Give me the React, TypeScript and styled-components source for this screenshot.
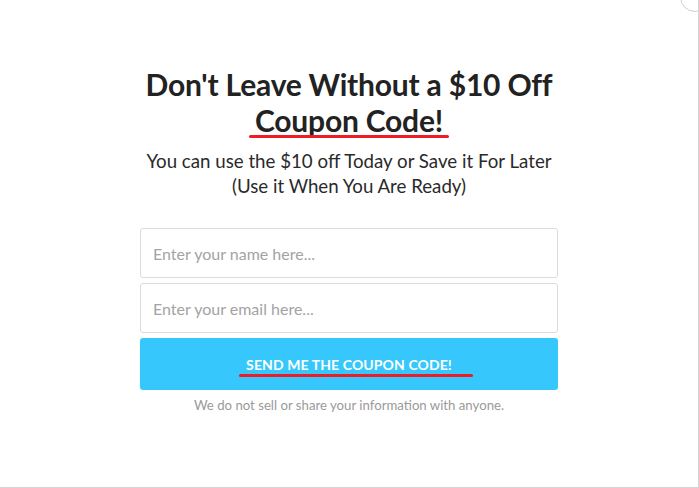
import React from 'react';
import styled, { createGlobalStyle } from 'styled-components';

const GlobalStyle = createGlobalStyle`
  html, body {
    margin: 0;
    padding: 0;
    background: #ffffff;
  }
`

const Frame = styled.div`
  position: relative;
  width: 699px;
  height: 488px;
  box-sizing: border-box;
  border-right: 1px solid #d4d4d4;
  border-bottom: 1px solid #d4d4d4;
  background: #ffffff;
  overflow: hidden;
  font-family: Lato, "Open Sans", sans-serif;
  display: flex;
  justify-content: center;
`

const CloseRing = styled.div`
  position: absolute;
  top: -18px;
  right: -12px;
  width: 28px;
  height: 28px;
  border: 1px solid #cfcfcf;
  border-radius: 50%;
`

const Column = styled.div`
  width: 418px;
  padding-top: 66px;
  display: flex;
  flex-direction: column;
  align-items: stretch;
`

const Title = styled.h1`
  margin: 0;
  text-align: center;
  font-size: 30px;
  line-height: 36px;
  font-weight: 700;
  color: #222222;
  letter-spacing: -0.2px;
`

const Marked = styled.span<{ $left: number; $right: number; $drop: number }>`
  position: relative;
  display: inline-block;

  &::after {
    content: "";
    position: absolute;
    left: ${p => -p.$left}px;
    right: ${p => -p.$right}px;
    bottom: ${p => -p.$drop}px;
    height: 3px;
    border-radius: 2px;
    background: #ee1c25;
  }
`

const Subtitle = styled.p`
  margin: 11px 0 0;
  text-align: center;
  font-size: 18.7px;
  line-height: 25px;
  color: #2a2a2a;
`

const Form = styled.form`
  margin-top: 29px;
  display: flex;
  flex-direction: column;
  gap: 5px;
`

const Field = styled.input`
  box-sizing: border-box;
  width: 100%;
  height: 50px;
  padding: 0 12px;
  border: 1px solid #dcdcdc;
  border-radius: 3px;
  font-family: inherit;
  font-size: 16px;
  color: #333333;
  outline: none;

  &::placeholder {
    color: #a3a3a3;
  }
`

const Submit = styled.button`
  height: 52px;
  border: none;
  border-radius: 3px;
  background: #36c8fc;
  color: #ffffff;
  font-family: inherit;
  font-weight: 700;
  font-size: 14px;
  text-transform: uppercase;
  letter-spacing: 0.1px;
  cursor: pointer;
  padding: 0;
`

const Note = styled.p`
  margin: 7px 0 0;
  text-align: center;
  font-size: 13.2px;
  color: #9a9a9a;
`

export default function App() {
  return (
    <>
      <GlobalStyle />
      <Frame>
        <CloseRing />
        <Column>
          <Title>
            Don't Leave Without a $10 Off
            <br />
            <Marked $left={6} $right={6} $drop={0}>Coupon Code!</Marked>
          </Title>
          <Subtitle>
            You can use the $10 off Today or Save it For Later
            <br />
            (Use it When You Are Ready)
          </Subtitle>
          <Form onSubmit={e => e.preventDefault()}>
            <Field type="text" placeholder="Enter your name here..." />
            <Field type="email" placeholder="Enter your email here..." />
            <Submit type="submit">
              <Marked $left={7} $right={21} $drop={4}>Send me the coupon code!</Marked>
            </Submit>
          </Form>
          <Note>We do not sell or share your information with anyone.</Note>
        </Column>
      </Frame>
    </>
  );
}
